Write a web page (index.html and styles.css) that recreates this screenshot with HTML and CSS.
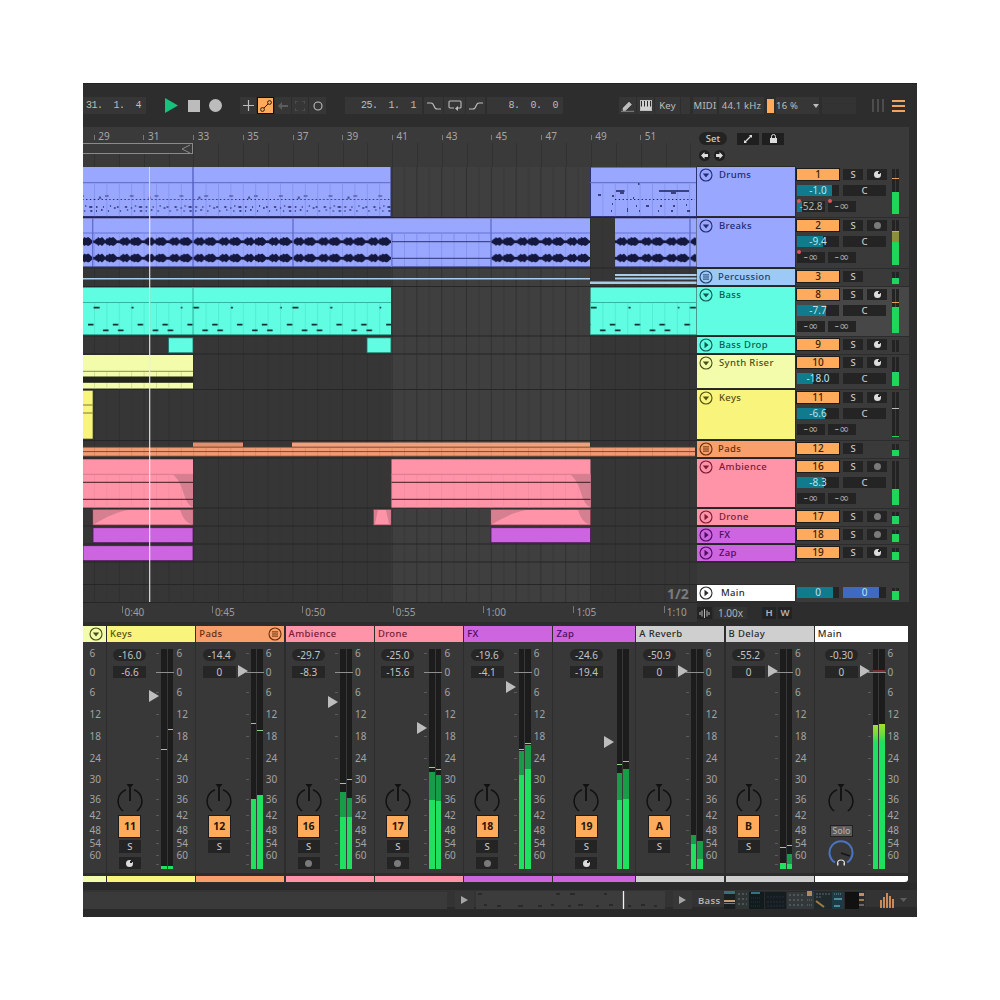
FILE: index.html
```html
<!DOCTYPE html>
<html lang="en">
<head>
<meta charset="utf-8">
<title>Live</title>
<link rel="stylesheet" href="styles.css">
</head>
<body>
<svg class="defs" width="0" height="0">
  <defs>
    <symbol id="i-down" viewBox="0 0 14 14"><circle cx="7" cy="7" r="6" fill="none" stroke="currentColor" stroke-width="1.1"/><path d="M3.8 5.6h6.4L7 9.6z" fill="currentColor"/></symbol>
    <symbol id="i-right" viewBox="0 0 14 14"><circle cx="7" cy="7" r="6" fill="none" stroke="currentColor" stroke-width="1.1"/><path d="M5.5 3.8v6.4L9.6 7z" fill="currentColor"/></symbol>
    <symbol id="i-group" viewBox="0 0 14 14"><circle cx="7" cy="7" r="6" fill="none" stroke="currentColor" stroke-width="1.1"/><path d="M4 4.9h6M4 7h6M4 9.1h6" stroke="currentColor" stroke-width="1"/></symbol>
    <symbol id="i-knob" viewBox="0 0 26 30"><path d="M9.5 0h7L13 4.5z" fill="#111"/><path d="M6.2 27A12.200 12.200 0 0 1 9 5.700M19.800 27A12.200 12.200 0 0 0 17 5.700" fill="none" stroke="#111" stroke-width="1.5"/><path d="M13 4v13" stroke="#111" stroke-width="1.8"/></symbol>
  </defs>
</svg>
<main class="app">
  <header class="transport">
    <div class="tbox num w63">31.  1.  4</div>
    <svg class="t-play" width="13" height="15" viewBox="0 0 13 15"><path d="M0 0l13 7.5L0 15z" fill="#17c37c"/></svg>
    <span class="t-stop"></span>
    <span class="t-rec"></span>
    <div class="tgroup">
      <span class="tbox ico w16"><svg width="11" height="11" viewBox="0 0 11 11"><path d="M5.5 0v11M0 5.5h11" stroke="#bdbdbd" stroke-width="1.2"/></svg></span>
      <span class="tbox ico w17 on"><svg width="12" height="12" viewBox="0 0 12 12"><circle cx="2.5" cy="9.5" r="1.9" fill="none" stroke="#2a1c0c"/><circle cx="9.5" cy="2.5" r="1.9" fill="none" stroke="#2a1c0c"/><path d="M4 8l4-4" stroke="#2a1c0c"/></svg></span>
      <span class="tbox ico w16"><svg width="10" height="8" viewBox="0 0 10 8"><path d="M4 0v3h6v2H4v3L0 4z" fill="#5c5c5c"/></svg></span>
      <span class="tbox ico w16"><svg width="10" height="10" viewBox="0 0 10 10"><path d="M0 3V0h3M7 0h3v3M10 7v3H7M3 10H0V7" fill="none" stroke="#5c5c5c"/></svg></span>
      <span class="tbox ico w17"><svg width="10" height="10" viewBox="0 0 10 10"><circle cx="5" cy="5" r="4" fill="none" stroke="#bdbdbd" stroke-width="1.1"/></svg></span>
    </div>
    <div class="tbox num w77 loopstart">25.  1.  1</div>
    <span class="tbox ico w19"><svg width="14" height="8" viewBox="0 0 14 8"><path d="M0 1h4q2 0 3 3t3 3h4" fill="none" stroke="#bdbdbd" stroke-width="1.1"/></svg></span>
    <span class="tbox ico w21"><svg width="14" height="11" viewBox="0 0 14 11"><path d="M6 8H2a1 1 0 0 1-1-1V2a1 1 0 0 1 1-1h10a1 1 0 0 1 1 1v5a1 1 0 0 1-1 1h-2" fill="none" stroke="#bdbdbd" stroke-width="1.1"/><path d="M10 6v5L7 8.500z" fill="#bdbdbd"/></svg></span>
    <span class="tbox ico w19"><svg width="14" height="8" viewBox="0 0 14 8"><path d="M0 7h4q2 0 3-3t3-3h4" fill="none" stroke="#bdbdbd" stroke-width="1.1"/></svg></span>
    <div class="tbox num w76 loopend">8.  0.  0</div>
    <span class="tbox ico w17 pencil"><svg width="13" height="12" viewBox="0 0 13 12"><path d="M2 8l6-6 2.500 2.500-6 6H2zM0 11.300h13" fill="#bdbdbd" stroke="#bdbdbd" stroke-width=".6"/></svg></span>
    <span class="tbox ico w17 gap1"><svg width="12" height="11" viewBox="0 0 12 11"><rect x=".5" y=".5" width="11" height="10" fill="#2b2b2b" stroke="#bdbdbd"/><path d="M1 6.500h10V10H1z M2 1h2v5.500H2z M5 1h2v5.500H5z M8 1h2v5.500H8z" fill="#d0d0d0"/></svg></span>
    <span class="tbox lbl w25 gap1">Key</span>
    <span class="tbox w9 gap1"></span>
    <span class="tbox lbl w24 gap3">MIDI</span>
    <span class="tbox lbl w45 gap2">44.1 kHz</span>
    <span class="cpu"></span>
    <span class="tbox lbl cpu-val">16 %<svg class="caret" width="6" height="4" viewBox="0 0 6 4"><path d="M0 0h6L3 4z" fill="#bdbdbd"/></svg></span>
    <span class="tbox w27 dim gap3"></span>
    <span class="tbox w7 dim"></span>
    <span class="tbars"><i></i><i></i><i></i></span>
    <span class="burger"><i></i><i></i><i></i></span>
  </header>

  <section class="arrange">
    <div class="tl">
      <div class="ruler">
        <span>29</span><span>31</span><span>33</span><span>35</span><span>37</span><span>39</span><span>41</span><span>43</span><span>45</span><span>47</span><span>49</span><span>51</span>
        <div class="brace"><svg width="10" height="10" viewBox="0 0 10 10"><path d="M9 1L1 5l8 4" fill="none" stroke="#8a8a8a"/></svg></div>
      </div>
      <svg class="lanes" width="614" height="436" viewBox="0 0 614 436">
        <defs>
          <pattern id="grid" patternUnits="userSpaceOnUse" width="24.8" height="436" x="11"><path d="M.5 0v436" stroke="#2d2d2d" stroke-width=".8"/><path d="M12.900 0v436" stroke="#323232" stroke-width=".6"/></pattern>
          <pattern id="cg-blue" patternUnits="userSpaceOnUse" width="12.4" height="436" x="11"><path d="M.5 0v436" stroke="#8290ee" stroke-width=".8"/></pattern>
          <pattern id="cg-cyan" patternUnits="userSpaceOnUse" width="12.4" height="436" x="11"><path d="M.5 0v436" stroke="#4ce8d0" stroke-width=".8"/></pattern>
          <pattern id="cg-pink" patternUnits="userSpaceOnUse" width="12.4" height="436" x="11"><path d="M.5 0v436" stroke="#f08aa0" stroke-width=".7"/></pattern>
          <pattern id="cg-or" patternUnits="userSpaceOnUse" width="12.4" height="436" x="11"><path d="M.5 0v436" stroke="#d38458" stroke-width=".7"/></pattern>
          <pattern id="cg-ye" patternUnits="userSpaceOnUse" width="12.4" height="436" x="11"><path d="M.5 0v436" stroke="#c9d27e" stroke-width=".7"/></pattern>
          <pattern id="n-drums" patternUnits="userSpaceOnUse" width="49.7" height="436" x="11">
            <path d="M11 29h1.500M13 29h1.500M36 29h1.500M38 29h1.500" stroke="#1b2056" stroke-width="1.200"/>
            <path d="M0 32.500h49.700" stroke="#1b2056" stroke-width="1.100" stroke-dasharray="1.300 2.500"/>
            <path d="M2 40h1.500M9 40h1M16 39h1M20 41h1.500M23 40h1.500M31 40h2M37 41h1M41 39h1M45 40h3M2 44h1M7 43h1.500M14 44h1M26 44h1M33 43h1M40 44h1M46 44h2" stroke="#1b2056" stroke-width="1.300"/>
            <path d="M5 32l1 -2.500 1 2.500" fill="none" stroke="#1b2056" stroke-width=".7"/>
          </pattern>
          <pattern id="n-bass" patternUnits="userSpaceOnUse" width="99.4" height="436" x="0">
            <path d="M10.600 140.700h6M48.500 140.700h2M98 140.700h1.400" stroke="#10302e" stroke-width="1.800"/>
            <path d="M5 157.700h5.500M29.800 157.700h5.500M54.600 157.700h5.500M79.400 157.700h5.500M20 163.300h5.500M35 163.300h5.500M69.700 163.300h5.500M84.700 163.300h5.500" stroke="#10302e" stroke-width="1.800"/>
          </pattern>
          <pattern id="wave" patternUnits="userSpaceOnUse" width="24.85" height="436" x="11">
            <g fill="#14183f">
              <path d="M0 73.200L1 73.500 2 71.500 3 72 4 70 6 71.500 8 70 10 72 11 73.500 13 71 14 72 15 70 17 71 19 70 21 71.500 23 73.500 24.85 73.200V76.200L23 76 21 78 19 79 17 78 15 79 14 77.500 13 78 11 76 10 77 8 79 6 77.500 4 79 3 77 2 77.500 1 76 0 76.200z"/>
              <path d="M0 89.800L1 90 2 88 3 88.500 4 86.500 6 88 8 86.500 10 88.500 11 90 13 87.500 14 88.500 15 86.500 17 87.500 19 86.500 21 88 23 90 24.85 89.800V92.800L23 92.500 21 94.500 19 95.500 17 94.500 15 95.500 14 94 13 94.500 11 92.500 10 93.500 8 95.500 6 94 4 95.500 3 93.500 2 94 1 92.500 0 92.800z"/>
            </g>
          </pattern>
          <clipPath id="waves-clip"><path d="M0 52h308v48H0zM408 52h99v48h-99zM532 52h81v48h-81z"/></clipPath>
        </defs>
        <rect width="614" height="436" fill="#363636"/>
        <rect x="308" width="199" height="436" fill="#3f3f3f"/>
        <rect width="614" height="436" fill="url(#grid)"/>
        <path d="M0 50.500h614M0 101h614M0 119.500h614M0 169h614M0 187h614M0 222.500h614M0 273.500h614M0 291h614M0 341h614M0 359h614M0 377h614M0 395h614M0 417.500h614M0 435.500h614" stroke="#262626" stroke-width="1.200"/>

        <!-- Drums -->
        <g stroke="#2a3272" stroke-width="1">
          <rect x="0" y="0" width="308" height="49.500" fill="#99a8fe" stroke="none"/>
          <path d="M0 49.500h308M308 0v49.500" fill="none"/>
          <rect x="507.500" y="0" width="106" height="49.500" fill="#99a8fe"/>
        </g>
        <path d="M0 15.700h308M507 15.700h106" stroke="#5c68c4" stroke-width="1"/>
        <rect y="16.200" width="308" height="33" fill="url(#cg-blue)"/>
        <rect y="16.200" width="308" height="33" fill="url(#n-drums)"/>
        <rect x="508" y="16.200" width="105" height="33" fill="url(#cg-blue)"/>
        <path d="M529 29h2M533 24h8.500M537 26h4M555 17h1.500M576 24h30M588 26h5M550 31h1" stroke="#1b2056" stroke-width="1.300"/>
        <path d="M532 32.500h80" stroke="#1b2056" stroke-width="1.100" stroke-dasharray="1.300 2.500"/>
        <path d="M515 28h3M529 37h1M544 42h1M553 39h1M563 39h3M577 39h2M590 39h2M603 38h1M528 44h1M544 44h1M556 44h1M575 44h1M588 44h2M604 44h3" stroke="#1b2056" stroke-width="1.300"/>
        <path d="M66.700 0v49M110 0v49" stroke="#4c58b8" stroke-width="1.200"/>

        <!-- Breaks -->
        <g fill="#99a8fe"><rect y="51.300" width="308" height="48.500"/><rect x="308" y="51.300" width="199" height="48.500"/><rect x="532" y="51.300" width="81.500" height="48.500"/></g>
        <path d="M0 66h507M532 66h81.500" stroke="#6773d2" stroke-width="1"/>
        <rect y="66.500" width="507" height="33" fill="url(#cg-blue)" opacity=".8"/>
        <rect x="532" y="66.500" width="81.500" height="33" fill="url(#cg-blue)" opacity=".8"/>
        <rect width="614" height="436" fill="url(#wave)" clip-path="url(#waves-clip)"/>
        <rect x="309" y="73" width="98.500" height="24" fill="#99a8fe"/>
        <path d="M309 66.500v33M9.700 51.500v48M110 51.500v48M210 51.500v48M408 51.500v48M607 51.500v48" stroke="#5f6ccb" stroke-width="1.300"/>
        <rect x="309" y="66.500" width="98.500" height="33" fill="url(#cg-blue)"/>
        <path d="M309 74.700h98.500M309 91.300h98.500" stroke="#2a3272" stroke-width="1"/>
        <path d="M0 100h308M309 100h198M532 100h81.500" stroke="#2a3272" stroke-width="1"/>

        <!-- Percussion -->
        <path d="M0 111.700h507" stroke="#a8cdec" stroke-width="1.600"/>
        <path d="M507 115.700h106.500" stroke="#a8cdec" stroke-width="2.600"/>
        <path d="M532 108h81.500M532 111.500h81.500" stroke="#a8cdec" stroke-width="1.800"/>

        <!-- Bass -->
        <g fill="#60fde2"><rect y="120.500" width="308" height="47.500"/><rect x="507.500" y="120.500" width="106" height="47.500"/></g>
        <path d="M0 135.500h308M507.500 135.500h106" stroke="#2fb7a4" stroke-width="1"/>
        <rect y="136" width="308" height="32" fill="url(#cg-cyan)"/>
        <rect x="507.500" y="136" width="106" height="32" fill="url(#cg-cyan)"/>
        <rect y="136" width="308" height="32" fill="url(#n-bass)"/>
        <rect x="507.500" y="136" width="106" height="32" fill="url(#n-bass)"/>
        <path d="M66.700 120v48M110 120v48" stroke="#2fb7a4" stroke-width="1"/>
        <path d="M0 168h308M507.500 168h106" stroke="#0f5a52"/>

        <!-- Bass Drop -->
        <g fill="#60fde2" stroke="#1f6d62" stroke-width=".8"><rect x="85.400" y="170.800" width="24.600" height="15"/><rect x="284" y="170.800" width="24" height="15"/></g>

        <!-- Synth Riser -->
        <rect y="188" width="110" height="33.500" fill="#f2fcaa"/>
        <rect y="204" width="110" height="17.500" fill="url(#cg-ye)"/>
        <path d="M0 204.300h110" stroke="#8a8f4a"/>
        <rect y="209.500" width="110" height="6.300" fill="#23251a"/>

        <!-- Keys -->
        <rect y="223.700" width="9.700" height="48" fill="#f8f47c"/>
        <path d="M0 238h9.700M0 246h9.700" stroke="#7e7a30"/>

        <!-- Pads -->
        <rect x="110" y="275.500" width="50" height="4.300" fill="#e0906c"/>
        <rect x="209" y="275.500" width="298" height="4.300" fill="#f0a07c"/>
        <rect x="0" y="280.300" width="612" height="8.800" fill="#ef9c72"/>
        <rect y="280.300" width="612" height="8.800" fill="url(#cg-or)"/>
        <path d="M0 284.600h612" stroke="#7a4020" stroke-width=".9"/>
        <path d="M0 280.300h612M0 289h612" stroke="#8a4c2a" stroke-width=".6"/>

        <!-- Ambience -->
        <g fill="#ff94a8"><rect y="292.300" width="110" height="48.300"/><rect x="308.500" y="292.300" width="199" height="48.300"/></g>
        <path d="M0 307.300h110M308.500 307.300h199" stroke="#d97a8e"/>
        <rect y="308" width="110" height="32.500" fill="url(#cg-pink)"/>
        <rect x="308.500" y="308" width="199" height="32.500" fill="url(#cg-pink)"/>
        <path d="M90 307.500h20v33q-6 -2 -10 -16q-3 -11 -10 -17zM487.500 307.500h20v33q-6 -2 -10 -16q-3 -11 -10 -17z" fill="#d67f90"/>
        <path d="M0 315.300h110M0 332.300h110M308.500 315.300h199M308.500 332.300h199" stroke="#3c1922" stroke-width="1"/>

        <!-- Drone -->
        <g fill="#ff94a8" stroke="#8a3a4a" stroke-width=".8"><rect x="10" y="342.400" width="100" height="15.600"/><rect x="290.500" y="342.400" width="17.500" height="15.600"/><rect x="408" y="342.400" width="99.500" height="15.600"/></g>
        <g fill="#d67f90">
          <path d="M10.500 343v14.500q22 -13 35 -14.500zM97 343h12.500v14.500q-8 -1 -12.500 -14.500z"/>
          <path d="M291 343h4l-3 14h-1zM303 343h4.500v14.500h-1.500z"/>
          <path d="M408.500 343v14.500q22 -13 35 -14.500zM495 343h12v14.500q-8 -1 -12 -14.500z"/>
        </g>

        <!-- FX -->
        <g fill="#cd64e0" stroke="#4a1a55" stroke-width=".8"><rect x="10" y="360.700" width="100" height="15"/><rect x="408" y="360.700" width="99.500" height="15"/></g>
        <!-- Zap -->
        <rect y="378.700" width="110" height="15" fill="#cd64e0" stroke="#4a1a55" stroke-width=".8"/>

        <path d="M66.700 0v435" stroke="#ececec" stroke-width="1.100"/>
      </svg>
      <div class="timeruler">
        <span>0:40</span><span>0:45</span><span>0:50</span><span>0:55</span><span>1:00</span><span>1:05</span><span>1:10</span>
      </div>
      <b class="page">1/2</b>
    </div>

    <div class="side">
      <div class="side-head">
        <div class="sh-row">
          <span class="set">Set</span>
          <span class="shbtn"><svg width="8" height="8" viewBox="0 0 8 8"><path d="M1 7l6-6" stroke="#ddd" stroke-width="1.300"/><path d="M0 5v3h3zM5 0h3v3z" fill="#ddd"/></svg></span>
          <span class="shbtn"><svg width="9" height="9" viewBox="0 0 9 9"><path d="M2.500 4V2.500a2 2 0 0 1 4 0V4" fill="none" stroke="#ddd"/><rect x="1" y="4" width="7" height="5" fill="#ddd"/></svg></span>
        </div>
        <div class="sh-row arrows">
          <span class="arrow"><svg width="7" height="7" viewBox="0 0 7 7"><path d="M3.500 0v2h3.500v3H3.500v2L0 3.500z" fill="#ddd"/></svg></span>
          <span class="arrow"><svg width="7" height="7" viewBox="0 0 7 7"><path d="M3.500 0v2H0v3h3.500v2L7 3.500z" fill="#ddd"/></svg></span>
        </div>
      </div>

      <div class="trow h51 blue">
        <div class="thead"><svg class="ti"><use href="#i-down"/></svg>Drums</div>
        <div class="ctl">
          <div class="cr"><b class="tn">1</b><span class="cb s">S</span><span class="cb"><i class="arm"></i></span></div>
          <div class="cr"><span class="vol"><i style="width:35px"></i><em>-1.0</em></span><span class="cb c">C</span></div>
          <div class="cr"><span class="snd dotted"><i style="width:5px"></i><em>-52.8</em></span><span class="snd dotted"><em class="inf">-∞</em></span></div>
        </div>
        <div class="m"><span class="pk-o" style="top:9px"></span><i style="height:22px"></i></div>
      </div>
      <div class="trow h51 blue">
        <div class="thead"><svg class="ti"><use href="#i-down"/></svg>Breaks</div>
        <div class="ctl">
          <div class="cr"><b class="tn">2</b><span class="cb s">S</span><span class="cb"><i class="dot"></i></span></div>
          <div class="cr"><span class="vol"><i style="width:26px"></i><em>-9.4</em></span><span class="cb c">C</span></div>
          <div class="cr"><span class="snd dotted"><em class="inf">-∞</em></span><span class="snd"><em class="inf">-∞</em></span></div>
        </div>
        <div class="m"><span class="pk-o" style="top:11px"></span><i class="ol" style="height:33px"></i></div>
      </div>
      <div class="trow h18 sky">
        <div class="thead group"><svg class="ti"><use href="#i-group"/></svg>Percussion</div>
        <div class="ctl"><div class="cr"><b class="tn">3</b><span class="cb s">S</span></div></div>
        <div class="m small"><i style="height:6px"></i></div>
      </div>
      <div class="trow h50 cyan sel">
        <div class="thead"><svg class="ti"><use href="#i-down"/></svg>Bass</div>
        <div class="ctl">
          <div class="cr"><b class="tn">8</b><span class="cb s">S</span><span class="cb"><i class="arm"></i></span></div>
          <div class="cr"><span class="vol"><i style="width:29px"></i><em>-7.7</em></span><span class="cb c">C</span></div>
          <div class="cr"><span class="snd"><em class="inf">-∞</em></span><span class="snd"><em class="inf">-∞</em></span></div>
        </div>
        <div class="m"><span class="pk-o" style="top:13px"></span><i style="height:26px"></i></div>
      </div>
      <div class="trow h18 cyan">
        <div class="thead"><svg class="ti"><use href="#i-right"/></svg>Bass Drop</div>
        <div class="ctl"><div class="cr"><b class="tn">9</b><span class="cb s">S</span><span class="cb"><i class="arm"></i></span></div></div>
        <div class="m small"></div>
      </div>
      <div class="trow h35 pale">
        <div class="thead"><svg class="ti"><use href="#i-down"/></svg>Synth Riser</div>
        <div class="ctl">
          <div class="cr"><b class="tn">10</b><span class="cb s">S</span><span class="cb"><i class="arm"></i></span></div>
          <div class="cr"><span class="vol"><i style="width:16px"></i><em>-18.0</em></span><span class="cb c">C</span></div>
        </div>
        <div class="m"><i style="height:14px"></i></div>
      </div>
      <div class="trow h51 yellow">
        <div class="thead"><svg class="ti"><use href="#i-down"/></svg>Keys</div>
        <div class="ctl">
          <div class="cr"><b class="tn">11</b><span class="cb s">S</span><span class="cb"><i class="arm"></i></span></div>
          <div class="cr"><span class="vol"><i style="width:28px"></i><em>-6.6</em></span><span class="cb c">C</span></div>
          <div class="cr"><span class="snd"><em class="inf">-∞</em></span><span class="snd"><em class="inf">-∞</em></span></div>
        </div>
        <div class="m"><span class="pk-w" style="top:16px"></span><i style="height:1px"></i></div>
      </div>
      <div class="trow h18 orange">
        <div class="thead group"><svg class="ti"><use href="#i-group"/></svg>Pads</div>
        <div class="ctl"><div class="cr"><b class="tn">12</b><span class="cb s">S</span></div></div>
        <div class="m small"><i style="height:6px"></i></div>
      </div>
      <div class="trow h50 pink">
        <div class="thead"><svg class="ti"><use href="#i-down"/></svg>Ambience</div>
        <div class="ctl">
          <div class="cr"><b class="tn">16</b><span class="cb s">S</span><span class="cb"><i class="dot"></i></span></div>
          <div class="cr"><span class="vol"><i style="width:27px"></i><em>-8.3</em></span><span class="cb c">C</span></div>
          <div class="cr"><span class="snd"><em class="inf">-∞</em></span><span class="snd"><em class="inf">-∞</em></span></div>
        </div>
        <div class="m"><i style="height:16px"></i></div>
      </div>
      <div class="trow h18 pink">
        <div class="thead"><svg class="ti"><use href="#i-right"/></svg>Drone</div>
        <div class="ctl"><div class="cr"><b class="tn">17</b><span class="cb s">S</span><span class="cb"><i class="dot"></i></span></div></div>
        <div class="m small"><i style="height:8px"></i></div>
      </div>
      <div class="trow h18 purple">
        <div class="thead"><svg class="ti"><use href="#i-right"/></svg>FX</div>
        <div class="ctl"><div class="cr"><b class="tn">18</b><span class="cb s">S</span><span class="cb"><i class="dot"></i></span></div></div>
        <div class="m small"><i style="height:8px"></i></div>
      </div>
      <div class="trow h18 purple">
        <div class="thead"><svg class="ti"><use href="#i-right"/></svg>Zap</div>
        <div class="ctl"><div class="cr"><b class="tn">19</b><span class="cb s">S</span><span class="cb"><i class="arm"></i></span></div></div>
        <div class="m small"><i style="height:8px"></i></div>
      </div>
      <div class="tfill"></div>
      <div class="trow h18 white">
        <div class="thead main-head"><svg class="ti"><use href="#i-right"/></svg>Main</div>
        <div class="ctl"><div class="cr cr-main"><span class="vol"><i style="width:36px"></i><em>0</em></span><span class="vol bluev"><i style="width:36px"></i><em>0</em></span></div></div>
        <div class="m small"><i style="height:9px"></i></div>
      </div>
      <div class="side-foot">
        <span class="sf wv"><svg width="11" height="9" viewBox="0 0 11 9"><path d="M1 3v3M3 1.500v6M5.500 0v9M8 1.500v6M10 3v3" stroke="#bbb"/></svg></span>
        <span class="sf zoomv">1.00x</span>
        <span class="sf hw first">H</span>
        <span class="sf hw">W</span>
      </div>
    </div>
  </section>

  <section class="mixer">
    <div class="strip partial pale">
      <div class="shd"><svg class="ti right"><use href="#i-down"/></svg></div>
      <div class="sbody">
        <div class="scale noticks"><span>6</span><span>0</span><span>6</span><span>12</span><span>18</span><span>24</span><span>30</span><span>36</span><span>42</span><span>48</span><span>54</span><span>60</span><span></span></div>
      </div>
      <div class="sfoot"></div>
    </div>

    <div class="strip yellow">
      <div class="shd">Keys</div>
      <div class="sbody">
        <div class="cc">
          <span class="pill">-16.0</span><span class="vbox">-6.6</span>
          <svg class="knob"><use href="#i-knob"/></svg>
          <b class="bign">11</b><span class="sq">S</span><span class="sq"><i class="arm"></i></span>
        </div>
        <div class="meter">
          <s class="tri" style="top:47px"></s>
          <div class="ch"><u style="top:100px"></u><i style="height:3px"></i></div>
          <div class="ch"><u style="top:80px"></u><i style="height:3px"></i></div>
        </div>
        <div class="scale"><span>6</span><span class="zero">0</span><span>6</span><span>12</span><span>18</span><span>24</span><span>30</span><span>36</span><span>42</span><span>48</span><span>54</span><span>60</span><span></span></div>
      </div>
      <div class="sfoot"></div>
    </div>

    <div class="strip orange">
      <div class="shd">Pads<svg class="ti right2"><use href="#i-group"/></svg></div>
      <div class="sbody">
        <div class="cc">
          <span class="pill">-14.4</span><span class="vbox">0</span>
          <svg class="knob"><use href="#i-knob"/></svg>
          <b class="bign">12</b><span class="sq">S</span>
        </div>
        <div class="meter">
          <s class="tri" style="top:22px"></s>
          <div class="ch"><u style="top:74px"></u><i style="height:70px"></i></div>
          <div class="ch"><u style="top:81px"></u><i style="height:74px"></i></div>
        </div>
        <div class="scale"><span>6</span><span class="zero">0</span><span>6</span><span>12</span><span>18</span><span>24</span><span>30</span><span>36</span><span>42</span><span>48</span><span>54</span><span>60</span><span></span></div>
      </div>
      <div class="sfoot"></div>
    </div>

    <div class="strip pink">
      <div class="shd">Ambience</div>
      <div class="sbody">
        <div class="cc">
          <span class="pill">-29.7</span><span class="vbox">-8.3</span>
          <svg class="knob"><use href="#i-knob"/></svg>
          <b class="bign">16</b><span class="sq">S</span><span class="sq"><i class="dot"></i></span>
        </div>
        <div class="meter">
          <s class="tri" style="top:53px"></s>
          <div class="ch"><u style="top:134px"></u><i class="two" style="height:77px"><b style="height:25px"></b></i></div>
          <div class="ch"><u style="top:130px"></u><i class="two" style="height:71px"><b style="height:19px"></b></i></div>
        </div>
        <div class="scale"><span>6</span><span class="zero">0</span><span>6</span><span>12</span><span>18</span><span>24</span><span>30</span><span>36</span><span>42</span><span>48</span><span>54</span><span>60</span><span></span></div>
      </div>
      <div class="sfoot"></div>
    </div>

    <div class="strip pink">
      <div class="shd">Drone</div>
      <div class="sbody">
        <div class="cc">
          <span class="pill">-25.0</span><span class="vbox">-15.6</span>
          <svg class="knob"><use href="#i-knob"/></svg>
          <b class="bign">17</b><span class="sq">S</span><span class="sq"><i class="dot"></i></span>
        </div>
        <div class="meter">
          <s class="tri" style="top:79px"></s>
          <div class="ch"><u style="top:118px"></u><i class="two" style="height:97px"><b style="height:28px"></b></i></div>
          <div class="ch"><u style="top:120px"></u><i class="two" style="height:94px"><b style="height:26px"></b></i></div>
        </div>
        <div class="scale"><span>6</span><span class="zero">0</span><span>6</span><span>12</span><span>18</span><span>24</span><span>30</span><span>36</span><span>42</span><span>48</span><span>54</span><span>60</span><span></span></div>
      </div>
      <div class="sfoot"></div>
    </div>

    <div class="strip purple">
      <div class="shd">FX</div>
      <div class="sbody">
        <div class="cc">
          <span class="pill">-19.6</span><span class="vbox">-4.1</span>
          <svg class="knob"><use href="#i-knob"/></svg>
          <b class="bign">18</b><span class="sq">S</span><span class="sq"><i class="dot"></i></span>
        </div>
        <div class="meter">
          <s class="tri" style="top:38px"></s>
          <div class="ch"><u style="top:100px"></u><i class="two" style="height:118px"><b style="height:24px"></b></i></div>
          <div class="ch"><u style="top:94px"></u><i class="two" style="height:124px"><b style="height:24px"></b></i></div>
        </div>
        <div class="scale"><span>6</span><span class="zero">0</span><span>6</span><span>12</span><span>18</span><span>24</span><span>30</span><span>36</span><span>42</span><span>48</span><span>54</span><span>60</span><span></span></div>
      </div>
      <div class="sfoot"></div>
    </div>

    <div class="strip purple zap">
      <div class="shd">Zap</div>
      <div class="sbody">
        <div class="cc">
          <span class="pill">-24.6</span><span class="vbox">-19.4</span>
          <svg class="knob"><use href="#i-knob"/></svg>
          <b class="bign">19</b><span class="sq">S</span><span class="sq"><i class="arm"></i></span>
        </div>
        <div class="meter">
          <s class="tri" style="top:93px"></s>
          <div class="ch"><u style="top:115px"></u><i class="two" style="height:96px"><b style="height:27px"></b></i></div>
          <div class="ch"><u style="top:112px"></u><i class="two" style="height:100px"><b style="height:30px"></b></i></div>
        </div>
      </div>
      <div class="sfoot"></div>
    </div>

    <div class="strip grey">
      <div class="shd">A Reverb</div>
      <div class="sbody">
        <div class="cc">
          <span class="pill">-50.9</span><span class="vbox">0</span>
          <svg class="knob"><use href="#i-knob"/></svg>
          <b class="bign">A</b><span class="sq">S</span>
        </div>
        <div class="meter">
          <s class="tri" style="top:22px"></s>
          <div class="ch"><i class="two" style="height:34px"><b style="height:9px"></b></i></div>
          <div class="ch"><i class="two" style="height:28px"><b style="height:18px"></b></i></div>
        </div>
        <div class="scale"><span>6</span><span class="zero">0</span><span>6</span><span>12</span><span>18</span><span>24</span><span>30</span><span>36</span><span>42</span><span>48</span><span>54</span><span>60</span><span></span></div>
      </div>
      <div class="sfoot"></div>
    </div>

    <div class="strip grey">
      <div class="shd">B Delay</div>
      <div class="sbody">
        <div class="cc">
          <span class="pill">-55.2</span><span class="vbox">0</span>
          <svg class="knob"><use href="#i-knob"/></svg>
          <b class="bign">B</b><span class="sq">S</span>
        </div>
        <div class="meter">
          <s class="tri" style="top:22px"></s>
          <div class="ch"><u style="top:198px"></u><i style="height:6px"></i></div>
          <div class="ch"><u style="top:196px"></u><i class="two" style="height:15px"><b style="height:10px"></b></i></div>
        </div>
        <div class="scale"><span>6</span><span class="zero">0</span><span>6</span><span>12</span><span>18</span><span>24</span><span>30</span><span>36</span><span>42</span><span>48</span><span>54</span><span>60</span><span></span></div>
      </div>
      <div class="sfoot"></div>
    </div>

    <div class="strip white mainstrip">
      <div class="shd">Main</div>
      <div class="sbody">
        <div class="cc">
          <span class="pill">-0.30</span><span class="vbox">0</span>
          <svg class="knob"><use href="#i-knob"/></svg>
          <span class="solo">Solo</span>
          <svg class="cue" width="26" height="26" viewBox="0 0 26 26">
            <path d="M7 22.500A11.500 11.500 0 1 1 19 22.500" fill="none" stroke="#4a74c0" stroke-width="2"/>
            <path d="M13 13l9 3" stroke="#151515" stroke-width="1.500"/>
            <path d="M9.500 23.500a3.500 3.500 0 0 1 7 0" fill="none" stroke="#ddd" stroke-width="1.200"/>
            <path d="M9 23h1.500v2.500H9zM15.500 23H17v2.500h-1.500z" fill="#ddd"/>
          </svg>
        </div>
        <div class="meter">
          <s class="tri" style="top:22px"></s>
          <span class="redpeak"></span>
          <div class="ch"><i class="hot" style="height:144px"></i></div>
          <div class="ch"><i class="hot" style="height:145px"></i></div>
        </div>
        <div class="scale"><span>6</span><span class="zero">0</span><span>6</span><span>12</span><span>18</span><span>24</span><span>30</span><span>36</span><span>42</span><span>48</span><span>54</span><span>60</span><span></span></div>
      </div>
      <div class="sfoot"></div>
    </div>
  </section>

  <footer class="bottom">
    <div class="b-left"></div>
    <span class="b-play first"><svg width="7" height="8" viewBox="0 0 7 8"><path d="M0 0l7 4-7 4z" fill="#a5a5a5"/></svg></span>
    <div class="b-preview">
      <svg width="189" height="18" viewBox="0 0 189 18">
        <path d="M2 3h4M80 3h4M94 3h5M128 3h3M8 14h3M21 15h4M42 15h5M62 15h4M75 14h3M92 15h3M102 14h5M120 15h3M133 14h4M152 15h3M165 14h4M178 15h3" stroke="#161616" stroke-width="1"/>
        <path d="M147.500 0v18" stroke="#f2f2f2" stroke-width="1.300"/>
      </svg>
    </div>
    <span class="b-play second"><svg width="7" height="8" viewBox="0 0 7 8"><path d="M0 0l7 4-7 4z" fill="#a5a5a5"/></svg></span>
    <span class="b-name">Bass</span>
    <svg class="thumbs" width="141" height="18" viewBox="0 0 141 18">
      <rect width="141" height="18" fill="#2b2b2b"/>
      <rect x="0" y="0" width="11" height="18" fill="#1a1f22"/><rect x="0" y="0" width="11" height="3" fill="#38707a"/><rect x="0" y="9" width="11" height="2" fill="#c99a6b"/><rect x="0" y="12" width="11" height="1" fill="#777"/>
      <rect x="12" y="0" width="13" height="18" fill="#2f3434"/>
      <path d="M14 3h9M14 8h9M14 13h9" stroke="#6f7777" stroke-dasharray="2 2"/>
      <rect x="25" y="1" width="15" height="17" fill="#111a1c"/><rect x="27" y="1" width="9" height="2" fill="#2f7481"/>
      <path d="M27 7h10M27 11h10M27 15h10" stroke="#26363a" stroke-dasharray="1 1"/>
      <rect x="41" y="1" width="21" height="17" fill="#161d20"/>
      <path d="M43 6h17M43 11h17M43 15h17" stroke="#243236" stroke-dasharray="2 1"/>
      <rect x="63" y="1" width="18" height="17" fill="#33383a"/>
      <path d="M65 4h14M65 9h14M65 14h14" stroke="#6e7577" stroke-dasharray="2 2"/>
      <rect x="81" y="1" width="9" height="17" fill="#33383a"/><rect x="83" y="0" width="5" height="5" fill="#b08a58"/>
      <path d="M83 9h5M83 14h5" stroke="#6e7577" stroke-dasharray="1 1"/>
      <rect x="90" y="1" width="18" height="17" fill="#20292c"/><path d="M92 10l8 6" stroke="#a07d40" stroke-width="2"/><path d="M92 3h14M92 6h6" stroke="#5e6a6e" stroke-dasharray="2 1"/>
      <rect x="108" y="1" width="12" height="17" fill="#1e3a44"/><path d="M110 8h8M110 15h6" stroke="#59a6b8" stroke-width="1.500"/><path d="M110 3h8" stroke="#889" stroke-dasharray="1 1"/>
      <rect x="121" y="1" width="14" height="17" fill="#111"/><rect x="135" y="2" width="5" height="3" fill="#bf8f5e"/><rect x="135" y="8" width="5" height="2" fill="#9a7b58"/><rect x="135" y="13" width="5" height="2" fill="#666"/>
    </svg>
    <svg class="chart" width="14" height="15" viewBox="0 0 14 15"><path d="M1 7v8M4 4v11M7 0v15M10 3v12M13 6v9" stroke="#f0a060" stroke-width="1.600"/></svg>
    <svg class="chart-arrow" width="7" height="4" viewBox="0 0 7 4"><path d="M0 0h7L3.500 4z" fill="#5d5d5d"/></svg>
  </footer>
</main>
</body>
</html>
```
FILE: styles.css
```css
* { box-sizing: border-box; }
html, body { margin: 0; padding: 0; background: #fff; }
body { width: 1000px; height: 1000px; padding: 83px 0 0 83px; font-family: "Noto Sans", sans-serif; }
.defs { position: absolute; }

.app { width: 834px; height: 834px; background: #2d2d2d; display: flex; flex-direction: column; overflow: hidden; border-top: 1px solid #222; }

/* Transport */
.transport { height: 43px; flex: none; display: flex; align-items: center; color: #bdbdbd; }
.tbox { height: 17px; background: #363636; display: inline-flex; align-items: center; justify-content: center; flex: none; }
.num { font-family: "Liberation Mono", monospace; font-size: 10px; letter-spacing: -.5px; white-space: pre; color: #bdbdbd; justify-content: flex-end; padding-right: 5px; }
.lbl { font-size: 9.500px; letter-spacing: .2px; color: #bdbdbd; white-space: nowrap; }
.w7 { width: 7px; } .w9 { width: 9px; } .w16 { width: 16px; } .w17 { width: 17px; } .w19 { width: 19px; margin-right: 1px; } .w21 { width: 21px; margin-right: 1px; }
.w24 { width: 24px; } .w25 { width: 25px; } .w27 { width: 27px; } .w45 { width: 45px; } .w63 { width: 63px; } .w76 { width: 76px; } .w77 { width: 77px; }
.dim { background: #333; }
.t-play { margin-left: 19px; flex: none; }
.t-stop { width: 12px; height: 12px; background: #bcbcbc; margin-left: 10px; flex: none; }
.t-rec { width: 13px; height: 13px; background: #bcbcbc; border-radius: 50%; margin-left: 9px; flex: none; }
.tgroup { display: flex; gap: 1px; margin-left: 18px; flex: none; }
.on { background: #ffab5b; box-shadow: 0 0 0 1px #111 inset; }
.loopstart { margin-left: 19px; margin-right: 2px; padding-right: 6px; }
.loopend { margin-left: 1px; }
.pencil { margin-left: 56px; }
.gap1 { margin-left: 1px; } .gap2 { margin-left: 2px; } .gap3 { margin-left: 3px; }
.cpu { width: 7px; height: 14px; background: #ffab5b; margin-left: 3px; flex: none; }
.cpu-val { width: 43px; margin-left: 2px; justify-content: flex-start; }
.caret { margin-left: 15px; }
.tbars { display: flex; gap: 3px; margin-left: 16px; height: 13px; }
.tbars i { width: 2px; background: #4d4d4d; }
.burger { display: flex; flex-direction: column; justify-content: space-between; width: 13px; height: 12px; margin-left: 8px; }
.burger i { height: 2px; background: #f2a45c; }

/* Arrangement */
.arrange { height: 495px; flex: none; display: flex; }
.tl { width: 614px; flex: none; display: flex; flex-direction: column; position: relative; }
.ruler { height: 40px; flex: none; background-color: #3a3a3a; display: flex; padding-left: 10.8px; position: relative; align-items: flex-start;
  background-image: repeating-linear-gradient(90deg, #313131 0 1px, transparent 1px 24.85px); background-size: 100% 24px; background-position: 10.8px 16px; background-repeat: no-repeat; }
.ruler span { width: 49.7px; flex: none; height: 16px; padding: 3px 0 0 4.500px; font-size: 10px; line-height: 12px; color: #a6a6a6; position: relative; }
.ruler span::before { content: ""; position: absolute; left: 0; top: 8px; width: 1px; height: 5px; background: #777; }
.brace { position: absolute; left: 0; top: 16px; width: 110px; height: 11px; border: 1px solid #8a8a8a; border-left: 0; display: flex; justify-content: flex-end; align-items: center; padding-right: 1px; background: #3a3a3a; }
.lanes { display: block; flex: none; }
.timeruler { height: 19px; flex: none; display: flex; padding-left: 38.5px; background: #363636; }
.timeruler span { width: 90.4px; flex: none; padding: 2px 0 0 3px; font-size: 10px; line-height: 14px; color: #9c9c9c; position: relative; }
.timeruler span::before { content: ""; position: absolute; left: 0; top: 3px; width: 1px; height: 7px; background: #777; }
.page { position: absolute; left: 584px; top: 459px; font-size: 14px; line-height: 16px; color: #7a7a7a; font-weight: 700; }

/* Side */
.side { width: 220px; flex: none; display: flex; flex-direction: column; background: #2d2d2d; }
.side-head { height: 40px; flex: none; width: 212px; background: #3a3a3a; padding: 5px 0 0 2px; }
.sh-row { display: flex; align-items: center; height: 13px; }
.set { width: 28px; height: 13px; border-radius: 7px; background: #232323; color: #cfcfcf; font-size: 9.500px; line-height: 13px; text-align: center; font-weight: 500; margin-right: 10px; }
.shbtn { width: 22px; height: 12px; background: #1f1f1f; display: inline-flex; align-items: center; justify-content: center; margin-right: 3px; }
.arrows { margin-top: 4px; gap: 4px; padding-left: 0; }
.arrow { width: 11px; height: 11px; border-radius: 50%; background: #1f1f1f; display: inline-flex; align-items: center; justify-content: center; }

.trow { display: flex; flex: none; width: 212px; --c: #fff; --t: #222; background: #3a3a3a; border-bottom: 1px solid #2c2c2c; }
.h51 { height: 51px; } .h50 { height: 50px; } .h18 { height: 18px; } .h35 { height: 35px; }
.sel { background: #474747; }
.tfill { height: 22px; flex: none; width: 212px; background: #3a3a3a; }
.blue { --c: #99a8fe; --t: #232b74; }
.sky { --c: #9cc9f5; --t: #23406a; }
.cyan { --c: #60fde2; --t: #0d5a50; }
.pale { --c: #f2fcaa; --t: #4c5018; }
.yellow { --c: #f8f47c; --t: #55520f; }
.orange { --c: #f99f6c; --t: #6a2e0a; }
.pink { --c: #ff94a8; --t: #7a1a35; }
.purple { --c: #cd64e0; --t: #4c0c5c; }
.grey { --c: #cfcfcf; --t: #2a2a2a; }
.white { --c: #ffffff; --t: #2a2a2a; }

.thead { width: 98px; flex: none; height: calc(100% - 1px); background: var(--c); color: var(--t); font-size: 9.500px; font-weight: 500; letter-spacing: .35px; line-height: 14px; display: flex; align-items: flex-start; padding: 1px 0 0 2px; gap: 6px; box-shadow: 0 0 0 .5px #1d1d1d; }
.thead.group { gap: 5px; }
.main-head { gap: 8px; }
.ti { width: 14px; height: 14px; flex: none; }
.ctl { width: 94px; flex: none; display: flex; flex-direction: column; gap: 5px; padding: 2px 0 0 2px; }
.cr { display: flex; gap: 4px; height: 11px; flex: none; }
.tn { width: 42px; height: 11px; background: #ffab5b; color: #3a2208; font-size: 10px; line-height: 11px; text-align: center; font-weight: 500; box-shadow: 0 0 0 1px #1c1c1c; }
.cb { width: 20px; height: 11px; background: #242424; color: #c6c6c6; font-size: 9.500px; line-height: 11px; text-align: center; display: inline-flex; align-items: center; justify-content: center; font-weight: 500; }
.cb.c { width: 43px; }
.vol { width: 42px; height: 11px; background: #242424; position: relative; display: block; color: #bfe3ea; font-size: 10px; line-height: 11px; text-align: center; }
.vol i { position: absolute; left: 0; top: 0; bottom: 0; background: #0f7b8c; }
.vol em { position: relative; font-style: normal; }
.bluev i { background: #3e6ac0; }
.bluev { width: 43px; }
.snd { width: 28px; height: 11px; background: #242424; position: relative; color: #b5b5b5; font-size: 10px; line-height: 11px; text-align: center; display: block; flex: none; white-space: nowrap; }
.snd + .snd { margin-left: -1px; }
.snd i { position: absolute; left: 0; top: 0; bottom: 0; background: #0f7b8c; }
.snd em { position: relative; font-style: normal; }
.snd em.inf { font-family: "DejaVu Sans", sans-serif; font-size: 12.500px; line-height: 10px; color: #a8a8a8; }
.dotted::before { content: ""; position: absolute; left: 0; top: -2px; width: 4px; height: 4px; border-radius: 50%; background: #e0555a; z-index: 1; }
.arm { width: 7px; height: 7px; border-radius: 50%; display: block; background: conic-gradient(#dcdcdc 0 25deg, #222 25deg 70deg, #dcdcdc 70deg); }
.dot { width: 7px; height: 7px; border-radius: 50%; display: block; background: #7a7a7a; }
.cr-main { gap: 4px; margin-top: 0; }

.m { width: 7px; margin: 2px 0 3px 3px; flex: none; position: relative; background: linear-gradient(90deg, #232323 0 3px, transparent 3px 4px, #232323 4px); display: flex; flex-direction: column; justify-content: flex-end; }
.m i { display: block; background: #20d55b; }
.m.small { margin: 3px 0 2px 3px; }
.m i.ol { background: linear-gradient(#8b8f3a 0 10px, #20d55b 10px); }
.pk-o, .pk-w { position: absolute; left: 0; right: 0; height: 1px; background: #e0a060; }
.pk-w { background: #bbb; }

.side-foot { height: 19px; flex: none; display: flex; align-items: center; padding-top: 1px; width: 212px; }
.sf { height: 12px; background: #232323; color: #b5b5b5; font-size: 9.500px; line-height: 12px; text-align: center; display: inline-flex; align-items: center; justify-content: center; }
.wv { width: 15px; }
.zoomv { width: 33px; margin-left: 2px; background: #333; font-size: 10px; }
.hw { width: 14px; margin-left: 2px; font-weight: 600; }
.hw.first { margin-left: 15px; }

/* Mixer */
.mixer { height: 261px; flex: none; display: flex; gap: 1.300px; padding-top: 4px; background: #2d2d2d; }
.strip { width: 88px; flex: none; display: flex; flex-direction: column; }
.partial { width: 22.700px; }
.zap { width: 81.500px; }
.mainstrip { width: 93px; }
.shd { height: 16px; flex: none; background: var(--c); color: var(--t); font-size: 9.500px; font-weight: 500; letter-spacing: .35px; line-height: 16px; padding-left: 3px; display: flex; align-items: center; justify-content: space-between; padding-right: 2px; }
.ti.right { margin-left: auto; margin-right: 1px; }
.ti.right2 { color: var(--t); }
.sbody { height: 231px; flex: none; display: flex; padding-left: 6.500px; background: #383838; }
.partial .sbody { padding-left: 3.500px; }
.zap .sbody { padding-left: 16.500px; }
.mainstrip .sbody { padding-left: 10px; }
.sfoot { height: 6px; margin-top: 3px; flex: none; background: var(--c); }
.mainstrip .sfoot { border-radius: 0 0 3px 0; }

.cc { width: 33px; flex: none; display: flex; flex-direction: column; align-items: center; padding: 7px 0 4px; }
.pill { width: 33px; height: 12px; border-radius: 6px; background: #262626; color: #c2c2c2; font-size: 10px; line-height: 12px; text-align: center; flex: none; }
.vbox { width: 33px; height: 12px; background: #262626; color: #c2c2c2; font-size: 10px; line-height: 12px; text-align: center; margin-top: 5px; flex: none; }
.knob { width: 26px; height: 30px; margin-top: auto; flex: none; }
.bign { width: 21px; height: 21px; margin-top: 2px; background: #ffab5b; color: #2a1606; font-size: 10.500px; font-weight: 700; line-height: 21px; text-align: center; box-shadow: 0 0 0 1px #1c1c1c; flex: none; }
.sq { width: 22px; height: 13px; margin-top: 3px; background: #242424; color: #c2c2c2; font-size: 9.500px; font-weight: 500; line-height: 13px; text-align: center; display: flex; align-items: center; justify-content: center; flex: none; }
.sq + .sq { margin-top: 4px; height: 12px; }
.strip.grey .cc, .strip.orange .cc { padding-bottom: 20px; }
.solo { width: 23px; height: 12px; margin-top: 11px; background: #5c5c5c; box-shadow: 0 0 0 1px #222 inset; color: #b5b5b5; font-size: 9px; line-height: 12px; text-align: center; flex: none; }
.cue { margin-top: 3px; flex: none; }
.mainstrip .cc { padding-bottom: 7px; }

.meter { width: 12px; height: 220px; margin: 7px 0 0 15px; display: flex; gap: 1px; position: relative; flex: none; }
.zap .meter { margin-left: 14px; }
.mainstrip .meter { margin-left: 14.700px; }
.ch { flex: 1; background: #1c1c1c; position: relative; display: flex; flex-direction: column; justify-content: flex-end; }
.ch i { display: block; background: #1fe05f; position: relative; }
.ch i.two { display: flex; flex-direction: column; background: #189c49; }
.ch i.two b { display: block; background: #189c49; }
.ch i.two::after { content: ""; flex: 1; background: #1fe05f; }
.ch i.hot { background: linear-gradient(#a4e02c 0, #6cdc3c 10px, #1fe05f 18px); }
.ch u { position: absolute; left: 0; right: 0; height: 1px; background: #8fd08f; text-decoration: none; }
.tri { position: absolute; left: -12.500px; width: 0; height: 0; margin-top: -6px; border-left: 10.500px solid #bdbdbd; border-top: 6px solid transparent; border-bottom: 6px solid transparent; text-decoration: none; z-index: 2; }
.redpeak { position: absolute; left: 0; right: 0; top: 21px; height: 3px; background: #7c2f2a; z-index: 1; }

.scale { width: 14px; margin: 2px 0 0 3px; height: 223px; display: grid; grid-template-rows: 18px 19.500px 21.500px 22px 21.500px 22px 21px 18px 15.500px 13.500px 12.500px 12px 6px; flex: none; }
.scale span { display: flex; align-items: center; color: #a3a3a3; font-size: 10px; line-height: 10px; position: relative; }
.scale span::before { content: ""; position: absolute; left: -20px; top: 50%; width: 3px; height: 1px; background: #5a5a5a; }
.scale span.zero::before { width: 18px; background: #8f8f8f; z-index: 1; }
.scale.noticks span::before { display: none; }

/* Bottom */
.bottom { flex: 1; display: flex; align-items: center; background: linear-gradient(#2a2a2a 0 7px, #333 7px 24px, #2a2a2a 24px); }
.b-left { width: 364px; height: 17px; background: #3a3a3a; flex: none; }
.b-play { width: 19px; height: 18px; background: #373737; display: inline-flex; align-items: center; justify-content: center; flex: none; }
.b-play.first { margin-left: 8px; }
.b-play.second { margin-left: 8px; }
.b-preview { width: 189px; height: 18px; margin-left: 2px; background: #3c3c3c; flex: none; display: flex; }
.b-name { margin-left: 6px; width: 26px; color: #b2b2b2; font-size: 9.500px; font-weight: 600; letter-spacing: .3px; flex: none; }
.thumbs { flex: none; }
.chart { flex: none; margin-left: 15px; }
.chart-arrow { flex: none; margin-left: 6px; }
```
